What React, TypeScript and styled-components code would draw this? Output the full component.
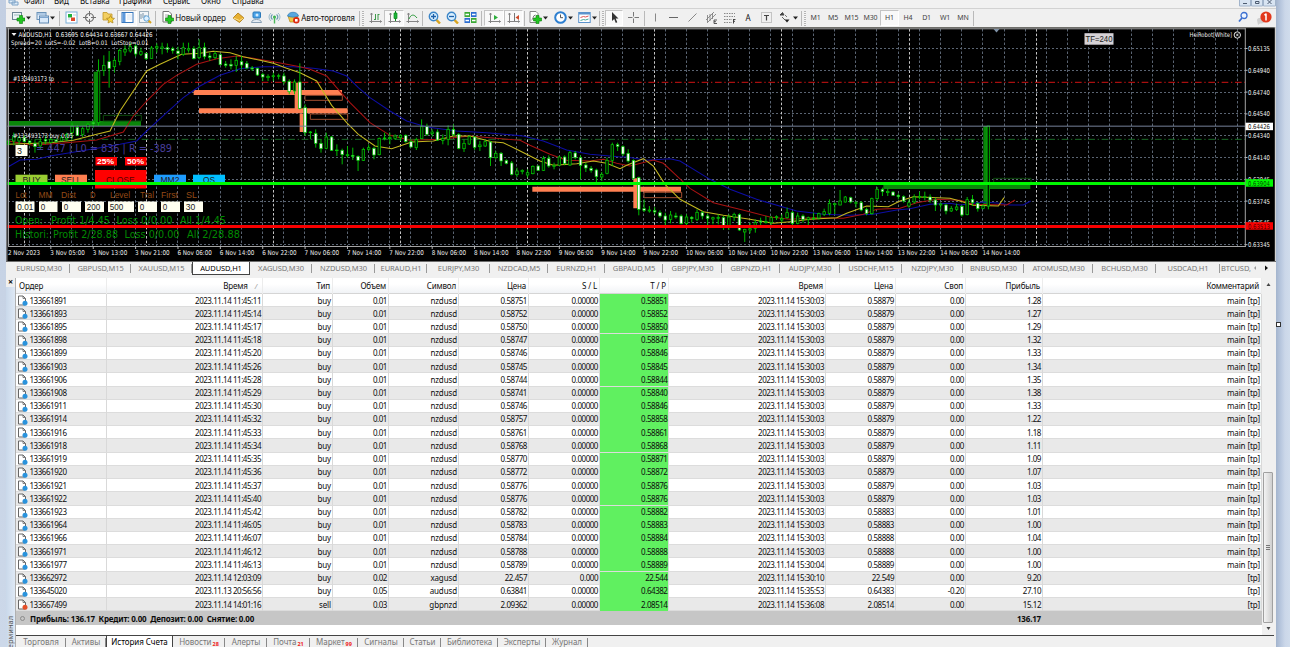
import React, {ReactElement} from 'react';

import styled, {createGlobalStyle} from "styled-components";

const GlobalStyle = createGlobalStyle`
  body {
    margin : 0;
    overflow : hidden;
    background : #c6d2e5;
    font-family : "Noto Sans", "Open Sans", sans-serif;
    font-size : 8px;
    color : #0c0c0c;
  }
  * { box-sizing : border-box; }
`;

const StyledDesktop = styled.div`
  display : flex;
  height : 647px;
  width : 1290px;
  overflow : hidden;
`;

const StyledLeftEdge = styled.div`
  width : 6px;
  flex : none;
  background : linear-gradient(180deg, #c3cfe2, #ccd8e9);
`;

const StyledRightEdge = styled.div`
  position : relative;
  width : 14px;
  flex : none;
  background : linear-gradient(90deg, #a3b4cd 0, #b9c8df 5px, #cbd7e9 9px, #d0dcec 100%);
`;

const StyledHandle = styled.div`
  position : absolute;
  left : 0;
  top : 322px;
  width : 5px;
  height : 5px;
  background : #fff;
  border : 1px solid #333;
`;

const StyledWindow = styled.div`
  width : 1270px;
  flex : none;
  background : #f0f0f0;
  display : flex;
  flex-direction : column;
`;

const StyledMenuBar = styled.div`
  display : flex;
  height : 9px;
  flex : none;
  overflow : hidden;
  background : #f1f1f1;
  border-bottom : 1px solid #d2d2d2;
`;

const StyledMenuItem = styled.span<{$w : number}>`
  width : ${p => p.$w}px;
  flex : none;
  margin-top : -5px;
  line-height : 12px;
  font-size : 8px;
  letter-spacing : -0.1px;
  white-space : nowrap;
`;

const StyledMenuIcon = styled.svg`
  width : 11px;
  height : 6px;
  margin : 0 5px 0 2px;
  flex : none;
`;

const StyledWinButtons = styled.svg`
  margin-left : auto;
  width : 37px;
  height : 7px;
`;

const StyledToolBar = styled.div`
  display : flex;
  align-items : center;
  height : 18px;
  flex : none;
  padding-left : 3px;
  background : #f0f0f0;
`;

const StyledTool = styled.div<{$w : number, $pressed? : boolean}>`
  width : ${p => p.$w}px;
  height : 16px;
  flex : none;
  display : flex;
  align-items : center;
  justify-content : center;
  gap : 1px;
  padding-bottom : 1px;
  font-size : 8px;
  letter-spacing : -0.15px;
  white-space : nowrap;
  color : #111;
  background : ${p => p.$pressed ? '#f9f9f9' : 'transparent'};
  border : ${p => p.$pressed ? '1px solid #c4c4c4' : '0'};
  border-right-color : #fff;
  border-bottom-color : #fff;

  svg {
    flex : none;
    display : block;
  }
`;

const StyledPeriod = styled(StyledTool)`
  font-size : 7px;
  color : #444;
  letter-spacing : -0.2px;
`;

const StyledToolSep = styled.div<{$w : number}>`
  width : ${p => p.$w}px;
  height : 15px;
  flex : none;
  background : linear-gradient(90deg, transparent 1px, #b9b9b9 1px, #b9b9b9 2px, transparent 2px);
`;

const StyledGrip = styled.div<{$w : number}>`
  width : ${p => p.$w}px;
  height : 15px;
  flex : none;
  background : repeating-linear-gradient(180deg, #b5b5b5 0, #b5b5b5 1px, #f6f6f6 1px, #f6f6f6 2px) 1px 0 / 2px 100% no-repeat;
`;

const StyledToolRight = styled.div`
  margin-left : auto;
  margin-right : 2px;
  display : flex;
  gap : 7px;
`;

const StyledChart = styled.svg`
  display : block;
  flex : none;
  width : 1270px;
  height : 234px;
  background : #000;
`;

const StyledChartTabs = styled.div`
  display : flex;
  flex : none;
  height : 17px;
  padding-left : 2px;
  border-top : 1px solid #6d6d6d;
  background : #f0f0f0;
`;

const StyledChartTab = styled.div<{$w : number, $active? : boolean}>`
  width : ${p => p.$w}px;
  height : ${p => p.$active ? 13 : 12}px;
  flex : none;
  text-align : center;
  line-height : 12px;
  font-size : 7.5px;
  letter-spacing : -0.08px;
  white-space : nowrap;
  position : relative;
  color : ${p => p.$active ? '#000' : '#777'};
  background : ${p => p.$active ? '#fff' : 'transparent'};
  border : ${p => p.$active ? '1px solid #444' : '0'};
  border-top : 0;

  &::after {
    content : '';
    position : absolute;
    right : 0;
    top : 2px;
    width : ${p => p.$active ? 0 : 1}px;
    height : 9px;
    background : #999;
  }

  &:last-of-type::after {
    width : 0;
  }
`;

const StyledTabArrows = styled.svg`
  width : 20px;
  height : 13px;
`;

const StyledTerminal = styled.div`
  display : flex;
  flex : none;
  height : 369px;
`;

const StyledSide = styled.div`
  width : 9px;
  flex : none;
  display : flex;
  flex-direction : column;
  justify-content : space-between;
  overflow : hidden;
  background : linear-gradient(90deg, #c9d8ea, #dfe9f5);
`;

const StyledSideClose = styled.div`
  height : 9px;
  line-height : 8px;
  text-align : center;
  font-size : 9px;
  font-weight : bold;
  background : #f0f0f0;
`;

const StyledSideLabel = styled.div`
  writing-mode : vertical-rl;
  transform : rotate(180deg);
  font-size : 7.5px;
  line-height : 9px;
  height : 31px;
  color : #555;
  white-space : nowrap;
  direction : rtl;
`;

const StyledPanel = styled.div`
  width : 1259px;
  flex : none;
  display : flex;
  flex-direction : column;
  border-left : 1px solid #b0b0b0;
`;

const StyledTableArea = styled.div`
  display : flex;
  height : 357px;
  flex : none;
  background : #fff;
`;

const StyledTable = styled.div`
  width : 1246px;
  flex : none;
`;

const COLUMNS = '91px 156px 70px 56px 70px 70px 71px 69px 157px 70px 70px 77px 219px';

const StyledHeaderRow = styled.div`
  display : grid;
  grid-template-columns : ${COLUMNS};
  height : 16px;
  background : linear-gradient(180deg, #fff 40%, #f1f3f6);
  border-bottom : 1px solid #d5d5d5;
`;

const StyledHeaderCell = styled.div<{$left? : boolean, $pad? : number}>`
  text-align : ${p => p.$left ? 'left' : 'right'};
  padding : 0 ${p => p.$pad || 2}px 0 3px;
  line-height : 15px;
  font-size : 8px;
  letter-spacing : -0.15px;
  white-space : nowrap;
  border-right : 1px solid #ececec;

  i {
    color : #999;
    font-size : 7px;
    margin-left : 7px;
  }
`;

const StyledRow = styled.div<{$odd : boolean}>`
  display : grid;
  grid-template-columns : ${COLUMNS};
  height : 13.22px;
  background : ${p => p.$odd ? '#e9e9e9' : '#fff'};
  border-bottom : 1px solid #dcdcdc;
`;

const StyledCell = styled.div<{$tp? : boolean}>`
  display : flex;
  align-items : center;
  justify-content : flex-end;
  padding-right : ${p => p.$tp ? 0.5 : 1}px;
  line-height : 12px;
  height : 13px;
  font-size : 8px;
  letter-spacing : -0.46px;
  white-space : nowrap;
  border-right : 1px solid #d9d9d9;
  background : ${p => p.$tp ? '#60f060' : 'transparent'};
`;

const StyledWordCell = styled(StyledCell)`
  letter-spacing : -0.12px;
`;

const StyledOrderCell = styled(StyledCell)`
  justify-content : flex-start;
  padding-left : 1px;
  gap : 1.5px;
`;

const StyledTotalRow = styled.div`
  display : flex;
  align-items : center;
  height : 14px;
  padding-left : 4px;
  background : #c6c6c6;
  font-size : 8px;
  font-weight : bold;
  letter-spacing : -0.18px;
  white-space : pre;
`;

const StyledTotalText = styled.div`
  width : 500px;
  padding-left : 5px;
`;

const StyledTotalSum = styled.div`
  width : 516px;
  text-align : right;
`;

const StyledTotalDot = styled.div`
  width : 5px;
  height : 5px;
  border : 1px solid #8b8b8b;
  border-radius : 50%;
`;

const StyledScroll = styled.div`
  width : 12px;
  flex : none;
  display : flex;
  flex-direction : column;
  align-items : center;
  background : #f0f0f0;
  padding-top : 2px;
`;

const StyledScrollArrow = styled.svg`
  width : 9px;
  height : 9px;
  flex : none;
`;

const StyledThumb = styled.div`
  width : 10px;
  height : 151px;
  margin-top : 183px;
  flex : none;
  display : flex;
  flex-direction : column;
  align-items : center;
  justify-content : center;
  gap : 1px;
  border : 1px solid #a0a0a0;
  border-radius : 1px;
  background : linear-gradient(90deg, #f3f3f3, #cfcfcf);

  i {
    width : 4px;
    height : 1px;
    background : #777;
  }
`;

const StyledBottomTabs = styled.div`
  display : flex;
  height : 12px;
  overflow : hidden;
  border-top : 1px solid #444;
`;

const StyledBottomTab = styled.div<{$w : number, $active? : boolean}>`
  position : relative;
  width : ${p => p.$w}px;
  flex : none;
  height : 14px;
  display : flex;
  justify-content : center;
  line-height : 12px;
  font-size : 8px;
  letter-spacing : -0.04px;
  white-space : nowrap;
  color : ${p => p.$active ? '#000' : '#777'};
  background : ${p => p.$active ? '#fff' : 'transparent'};
  border : ${p => p.$active ? '1px solid #444' : '0'};
  border-width : 0 1px;

  &::after {
    content : '';
    position : absolute;
    right : 0;
    top : 2px;
    width : ${p => p.$active ? 0 : 1}px;
    height : 9px;
    background : #888;
  }

  b {
    color : #e22;
    font-size : 5.5px;
    letter-spacing : 0;
    margin : 2px 0 0 1px;
  }
`;

/* ---------- icons ---------- */

function Caret(): ReactElement {
  return <svg width="5" height="4"><path d="M0 .5h5L2.500 3.500z" fill="#222" /></svg>;
}

function Plus({x, y}: {x : number, y : number}): ReactElement {
  return <path d={`M${x + 2.5} ${y}h3v2.500h2.500v3h-2.500v2.500h-3v-2.500h-2.500v-3h2.500z`} fill="#23c423" stroke="#0b7d0b" strokeWidth=".6" />;
}

function Axes(): ReactElement {
  return <path d="M2.500 2v10M1.500 3.500l1-1.500 1 1.500M.5 10.500h12M11 9.500l1.500 1L11 11.500" stroke="#858585" fill="none" />;
}

function Magnifier({plus}: {plus? : boolean}): ReactElement {
  return (
    <>
      <path d="M8 8.500l4 4" stroke="#d9a520" strokeWidth="2.400" />
      <circle cx="5.500" cy="5.500" r="4.200" fill="#d8efff" stroke="#3c86c8" strokeWidth="1.400" />
      <path d={plus ? "M3 5.500h5M5.500 3v5" : "M3 5.500h5"} stroke="#1c5fa8" strokeWidth="1.300" />
    </>
  );
}

const icons: Record<string, ReactElement> = {
  newChart : <><rect x=".5" y="1.500" width="9" height="7" fill="#eef4f8" stroke="#6b8494" /><path d="M2 4h6" stroke="#9bb" /><Plus x={5} y={4.5} /></>,
  profiles : <><rect x="1" y="1.500" width="9" height="7" fill="#e3eefa" stroke="#6c93b8" /><rect x="3.500" y="5" width="9" height="7" fill="#d9e9fa" stroke="#5e88b2" /><path d="M1 3h9M3.500 6.500h9" stroke="#7fa6cf" /></>,
  market : <><rect x="1" y="1" width="11" height="11" fill="#fff" stroke="#7ab0d8" /><path d="M3 3h4v3.500H3z" fill="#1fb13a" /><path d="M6 6.500h4V10H6z" fill="#e0482a" /><path d="M3 8h2M8 4h3" stroke="#bcd" /></>,
  target : <><circle cx="6.500" cy="6.500" r="4" fill="none" stroke="#707070" strokeWidth="1.200" /><path d="M6.500 0v5M6.500 8v5M0 6.500h5M8 6.500h5" stroke="#707070" /></>,
  folder : <><path d="M1 1.500h4l1 1.500h4v6H1z" fill="#f3cf62" stroke="#bf9526" strokeWidth=".8" /><path d="M8.500 4.500l1.300 2.500 2.700.4-2 1.900.5 2.700-2.500-1.300L6 12l.5-2.700-2-1.900 2.700-.4z" fill="#f7d23c" stroke="#a8801c" strokeWidth=".7" /></>,
  navigator : <><rect x="1" y="1.500" width="11" height="10" fill="#fff" stroke="#3777bd" /><path d="M1.500 2h3v9h-3z" fill="#5d99dc" /><path d="M6 4h5M6 6h5M6 8h5" stroke="#d4e2f1" /></>,
  tester : <><rect x=".5" y=".5" width="9" height="11" fill="#f2f5f8" stroke="#9fb0bd" /><path d="M2 3v5M4 2v5M6 4v5" stroke="#7893a8" /><path d="M9 9l3 3" stroke="#d9a520" strokeWidth="2" /><circle cx="7.500" cy="7.500" r="2.700" fill="#dff1ff" stroke="#5da0d5" /></>,
  order : <><path d="M2 .5h6l2.500 2.500v8H2z" fill="#fff" stroke="#777" /><path d="M4 4h4M4 6h3" stroke="#aaa" /><Plus x={4.5} y={4.5} /></>,
  gold : <><path d="M1 7l5-5 6 5-4.500 4.500z" fill="#e7b032" stroke="#a9750e" strokeWidth=".8" /><path d="M1.500 7l6 2.500L11.500 7" stroke="#fbe08a" fill="none" /></>,
  terminal : <><rect x="3" y="1" width="7.500" height="6" rx="1" fill="#4aa3e8" stroke="#2b78b8" /><path d="M1.500 11.500c0-4 10-4 10 0z" fill="#e6edf4" stroke="#8aa0b5" /><circle cx="7" cy="4" r="1.500" fill="#d2ecff" /></>,
  signal : <><path d="M3 10a5 5 0 010-8M10 10a5 5 0 000-8" stroke="#9dbccb" fill="none" /><path d="M4.500 8.500a3 3 0 010-5M8.500 8.500a3 3 0 000-5" stroke="#6e9eb5" fill="none" strokeWidth="1.300" /><circle cx="6.500" cy="6" r="1.500" fill="#36b14a" /><path d="M6.500 6v6.500" stroke="#4bb85a" strokeWidth="1.400" /></>,
  auto : <><path d="M1 5l2 6h5l3-6z" fill="#f0c541" stroke="#b48a1d" strokeWidth=".7" /><path d="M.5 5c1-5 10-5 11 0-3 1.500-8 1.500-11 0z" fill="#58a8e0" stroke="#2d78b2" strokeWidth=".7" /><circle cx="9.300" cy="9.300" r="3.200" fill="#dd2b12" /><rect x="8" y="8" width="2.600" height="2.600" fill="#fff" /></>,
  bars : <><Axes /><path d="M6.500 3v6M5 8.500h1.500M9 3v6M9 3.500H10.500" stroke="#3f9a4a" fill="none" /></>,
  candles : <><Axes /><path d="M7.500 0v10" stroke="#0c8a1c" /><path d="M6 2h3v5.500H6z" fill="#1eb43a" stroke="#0c8a1c" strokeWidth=".7" /></>,
  line : <><Axes /><path d="M3 8c2-5 5-5 8-1" stroke="#2a9a3a" fill="none" /></>,
  zoomIn : <Magnifier plus />,
  zoomOut : <Magnifier />,
  tile : <><path d="M.5 1h5.500v5H.5z" fill="#3aa934" /><path d="M7 1h5.500v5H7z" fill="#2a6cd0" /><path d="M.5 7h5.500v5H.5z" fill="#2a6cd0" /><path d="M7 7h5.500v5H7z" fill="#3aa934" /><path d="M1.500 3.500h3.500M8 3.500h3.500M1.500 9.500h3.500M8 9.500h3.500" stroke="#fff" strokeWidth="1.600" /></>,
  scroll : <><Axes /><path d="M6 4l4 2.500L6 9z" fill="#2eae3c" /></>,
  shift : <><Axes /><path d="M7.500 2v8" stroke="#777" /><path d="M12 4v5L8.500 6.500z" fill="#cf4a2a" /></>,
  indicator : <><path d="M1 .5h6l2 2v9H1z" fill="#fff" stroke="#888" /><path d="M2.500 9c2 0 1-5 4-5" stroke="#777" fill="none" /><Plus x={4.5} y={4.5} /></>,
  clock : <><circle cx="6.500" cy="6.500" r="5.300" fill="#fff" stroke="#2d7fd0" strokeWidth="2" /><path d="M6.500 3.500v3.200H9" stroke="#555" fill="none" /></>,
  template : <><rect x=".7" y="1.500" width="11.500" height="10" fill="#fff" stroke="#5b93cc" /><path d="M1 2.500h11" stroke="#5b93cc" strokeWidth="2" /><path d="M2.500 6.500l3-1 2 .5 3-1" stroke="#d55" fill="none" /><path d="M2.500 9.500l3-1 2 .5 3-1" stroke="#4a9" fill="none" /></>,
  pointer : <path d="M4 1v9l2.200-2 1.600 4 1.500-.7L7.700 7.500H10.500z" fill="#333" />,
  cross : <path d="M6.500 1v4.500M6.500 7.500v4.500M1 6.500h4.500M7.500 6.500h4.500" stroke="#777" />,
  vline : <path d="M6.500 2.500v8" stroke="#888" />,
  hline : <path d="M2 6.500h9" stroke="#666" />,
  trend : <path d="M2.500 10.500l8-8" stroke="#888" />,
  channel : <><path d="M1 9l8-8M2 12l9-9M2.500 4v7M5 3v7M7.500 2v6" stroke="#777" strokeWidth=".8" /><path d="M9 9h3M9 9v3.500h3M9 10.700h2" stroke="#333" fill="none" strokeWidth=".8" /></>,
  fibo : <><path d="M1 2.500h11M1 5.500h11M1 8.500h8M1 11.500h8" stroke="#888" strokeDasharray="1.500 1" /><path d="M10.500 8v4.500M10.500 8.500h2M10.500 10.300h1.500" stroke="#333" fill="none" strokeWidth=".9" /></>,
  arrows : <><path d="M1 4l2.500-2.500L5 4z" fill="#444" stroke="#444" /><path d="M3 6l3 3" stroke="#666" /><path d="M5.500 8.500h5l-2.500 3z" fill="#222" /><path d="M6 4l2 2" stroke="#777" /></>,
  textLabel : <><rect x="1.500" y="1.500" width="10" height="10" fill="none" stroke="#999" strokeDasharray="1 1" /><path d="M4 4.500h5M6.500 4.500v5" stroke="#444" strokeWidth="1.200" /></>,
};

interface IconProps {
  name : string
}

function Icon({name}: IconProps): ReactElement {
  return <svg width="13" height="13" viewBox="0 0 13 13">{icons[name]}</svg>;
}

/* ---------- data ---------- */

interface ITool {
  w : number
  icon? : string
  text? : string
  caret? : boolean
  pressed? : boolean
  kind? : 'sep' | 'grip' | 'period'
}

const tools: ITool[] = [
  {w : 24, icon : 'newChart', caret : true},
  {w : 25, icon : 'profiles', caret : true},
  {w : 4, kind : 'sep'},
  {w : 18, icon : 'market'},
  {w : 19, icon : 'target'},
  {w : 18, icon : 'folder'},
  {w : 20, icon : 'navigator', pressed : true},
  {w : 17, icon : 'tester'},
  {w : 4, kind : 'sep'},
  {w : 71, icon : 'order', text : 'Новый ордер'},
  {w : 18, icon : 'gold'},
  {w : 18, icon : 'terminal'},
  {w : 19, icon : 'signal'},
  {w : 74, icon : 'auto', text : 'Авто-торговля'},
  {w : 3, kind : 'sep'},
  {w : 5, kind : 'grip'},
  {w : 18, icon : 'bars'},
  {w : 20, icon : 'candles', pressed : true},
  {w : 17, icon : 'line'},
  {w : 4, kind : 'sep'},
  {w : 18, icon : 'zoomIn'},
  {w : 18, icon : 'zoomOut'},
  {w : 19, icon : 'tile'},
  {w : 4, kind : 'sep'},
  {w : 20, icon : 'scroll', pressed : true},
  {w : 19, icon : 'shift', pressed : true},
  {w : 3, kind : 'sep'},
  {w : 25, icon : 'indicator', caret : true},
  {w : 25, icon : 'clock', caret : true},
  {w : 22, icon : 'template', caret : true},
  {w : 3, kind : 'sep'},
  {w : 4, kind : 'grip'},
  {w : 18, icon : 'pointer', pressed : true},
  {w : 20, icon : 'cross'},
  {w : 3, kind : 'sep'},
  {w : 18, icon : 'vline'},
  {w : 19, icon : 'hline'},
  {w : 19, icon : 'trend'},
  {w : 18, icon : 'channel'},
  {w : 19, icon : 'fibo'},
  {w : 18, text : 'A'},
  {w : 19, icon : 'textLabel'},
  {w : 24, icon : 'arrows', caret : true},
  {w : 3, kind : 'sep'},
  {w : 4, kind : 'grip'},
  {w : 17, text : 'M1', kind : 'period'},
  {w : 18, text : 'M5', kind : 'period'},
  {w : 19, text : 'M15', kind : 'period'},
  {w : 19, text : 'M30', kind : 'period'},
  {w : 19, text : 'H1', kind : 'period', pressed : true},
  {w : 18, text : 'H4', kind : 'period'},
  {w : 19, text : 'D1', kind : 'period'},
  {w : 18, text : 'W1', kind : 'period'},
  {w : 18, text : 'MN', kind : 'period'},
  {w : 3, kind : 'sep'},
];

const menu: [string, number][] = [
  ['Файл', 30], ['Вид', 26], ['Вставка', 39], ['Графики', 44], ['Сервис', 38], ['Окно', 31], ['Справка', 40],
];

const chartTabs: [string, number][] = [
  ['EURUSD,M30', 62], ['GBPUSD,M15', 61], ['XAUUSD,M15', 61], ['AUDUSD,H1', 58], ['XAGUSD,M30', 62],
  ['NZDUSD,M30', 63], ['EURAUD,H1', 52], ['EURJPY,M30', 63], ['NZDCAD,M5', 58], ['EURNZD,H1', 57],
  ['GBPAUD,M5', 58], ['GBPJPY,M30', 59], ['GBPNZD,H1', 58], ['AUDJPY,M30', 60], ['USDCHF,M15', 62],
  ['NZDJPY,M30', 61], ['BNBUSD,M30', 61], ['ATOMUSD,M30', 69], ['BCHUSD,M30', 63], ['USDCAD,H1', 64], ['BTCUSD,', 32],
];

const bottomTabs: [string, number, string][] = [
  ['Торговля', 50, ''], ['Активы', 40, ''], ['История Счета', 67, ''], ['Новости', 52, '28'], ['Алерты', 42, ''],
  ['Почта', 43, '21'], ['Маркет', 48, '99'], ['Сигналы', 46, ''], ['Статьи', 37, ''], ['Библиотека', 57, ''],
  ['Эксперты', 48, ''], ['Журнал', 42, ''],
];

// order, open time, type, volume, symbol, price, s/l, t/p, close time, price, swap, profit, comment
const nzd = (id : string, open : string, price : string, tp : string, close : string, closePrice : string, profit : string) => [
  '133661' + id, '2023.11.14 11:' + open, 'buy', '0.01', 'nzdusd', '0.58' + price, '0.00000', '0.58' + tp,
  '2023.11.14 15:30:' + close, '0.58' + closePrice, '0.00', profit, 'main [tp]',
];

const orders: string[][] = [
  nzd('891', '45:11', '751', '851', '03', '879', '1.28'),
  nzd('893', '45:14', '752', '852', '03', '879', '1.27'),
  nzd('895', '45:17', '750', '850', '03', '879', '1.29'),
  nzd('898', '45:18', '747', '847', '03', '879', '1.32'),
  nzd('899', '45:20', '746', '846', '03', '879', '1.33'),
  nzd('903', '45:26', '745', '845', '03', '879', '1.34'),
  nzd('906', '45:28', '744', '844', '03', '879', '1.35'),
  nzd('908', '45:29', '741', '840', '03', '879', '1.38'),
  nzd('911', '45:30', '746', '846', '03', '879', '1.33'),
  nzd('914', '45:32', '757', '858', '03', '879', '1.22'),
  nzd('916', '45:33', '761', '861', '03', '879', '1.18'),
  nzd('918', '45:34', '768', '868', '03', '879', '1.11'),
  nzd('919', '45:35', '770', '871', '03', '879', '1.09'),
  nzd('920', '45:36', '772', '872', '03', '879', '1.07'),
  nzd('921', '45:37', '776', '876', '03', '879', '1.03'),
  nzd('922', '45:40', '776', '876', '03', '879', '1.03'),
  nzd('923', '45:42', '782', '882', '03', '883', '1.01'),
  nzd('964', '46:05', '783', '883', '03', '883', '1.00'),
  nzd('966', '46:07', '784', '884', '03', '888', '1.04'),
  nzd('971', '46:12', '788', '888', '03', '888', '1.00'),
  nzd('977', '46:13', '789', '889', '04', '889', '1.00'),
  ['133662972', '2023.11.14 12:03:09', 'buy', '0.02', 'xagusd', '22.457', '0.000', '22.544', '2023.11.14 15:30:10', '22.549', '0.00', '9.20', '[tp]'],
  ['133645020', '2023.11.13 20:56:56', 'buy', '0.05', 'audusd', '0.63841', '0.00000', '0.64382', '2023.11.14 15:35:53', '0.64383', '-0.20', '27.10', '[tp]'],
  ['133667499', '2023.11.14 14:01:16', 'sell', '0.03', 'gbpnzd', '2.09362', '0.00000', '2.08514', '2023.11.14 15:36:08', '2.08514', '0.00', '15.12', '[tp]'],
];

const headers = ['Ордер', 'Время', 'Тип', 'Объем', 'Символ', 'Цена', 'S / L', 'T / P', 'Время', 'Цена', 'Своп', 'Прибыль', 'Комментарий'];

// high, low, body top, body bottom, 1 = bull / 0 = bear (thirds of a pixel)
const candles: number[][] = [
  [335,355,345,355,1],[320,358,332,345,1],[330,390,335,345,1],[328,350,335,347,0],[343,358,345,350,0],[340,380,352,362,0],
  [335,370,347,360,1],[330,355,340,345,0],[335,352,340,350,1],[338,350,342,346,0],[330,345,335,345,1],[320,345,325,337,1],
  [290,340,300,320,1],[298,330,304,328,0],[302,333,308,325,1],[290,320,295,310,1],[283,305,290,293,0],[100,300,135,290,1],
  [88,150,118,133,1],[75,185,107,127,0],[95,140,103,122,1],[68,118,73,106,1],[58,90,70,78,1],[50,80,62,75,1],
  [55,92,60,84,0],[65,90,77,85,1],[80,102,82,98,0],[60,98,66,97,1],[52,80,62,66,1],[50,85,63,67,1],
  [52,80,65,70,0],[62,83,68,74,0],[62,100,75,83,0],[50,90,65,85,1],[50,80,68,72,1],[60,100,68,98,0],
  [40,100,65,95,1],[50,100,65,92,0],[80,105,90,94,0],[75,100,83,95,1],[83,118,86,116,0],[105,125,114,118,0],
  [100,130,115,120,0],[90,138,103,118,1],[90,130,107,117,0],[105,130,112,126,0],[120,135,126,129,0],[125,150,127,147,0],
  [140,165,145,153,0],[145,165,151,155,1],[140,165,149,152,1],[143,160,149,151,1],[140,175,150,167,0],[160,205,166,197,0],
  [160,205,168,195,1],[112,250,168,247,0],[235,330,245,320,0],[315,340,318,320,1],[310,365,322,352,0],[340,380,352,368,0],
  [320,370,333,367,1],[330,375,333,373,0],[355,390,372,374,1],[368,415,373,386,0],[360,395,386,389,1],[365,402,388,391,0],
  [388,435,391,403,0],[365,405,370,403,1],[355,375,365,370,1],[362,400,367,387,0],[335,388,337,386,1],[320,343,336,338,1],
  [320,355,335,338,1],[325,342,330,337,1],[325,345,328,335,1],[325,350,328,347,0],[340,365,347,363,0],[335,372,340,365,1],
  [280,340,302,338,1],[293,330,302,325,0],[310,332,318,323,1],[310,345,318,342,0],[325,355,337,343,1],[298,358,310,340,1],
  [295,330,310,326,0],[322,370,325,367,0],[340,378,352,368,1],[328,357,332,354,1],[330,372,333,364,0],[345,375,357,362,1],
  [340,363,347,360,1],[345,420,348,395,0],[375,400,382,395,1],[378,420,382,405,0],[400,415,404,412,0],[405,448,411,445,0],
  [425,453,435,446,1],[430,445,433,437,1],[430,455,440,447,1],[418,445,421,443,1],[418,435,420,433,0],[390,435,397,433,1],
  [388,425,397,420,0],[410,430,418,421,1],[390,420,393,418,1],[388,418,393,413,0],[375,420,380,417,1],[375,400,381,395,0],
  [388,460,395,418,0],[410,438,417,426,0],[420,440,427,433,0],[428,470,432,452,0],[438,465,445,453,1],[395,445,403,442,1],
  [350,420,356,403,1],[350,375,356,361,0],[358,390,362,384,0],[370,410,382,405,0],[400,460,403,457,0],[452,568,455,550,0],
  [520,558,548,553,0],[540,560,552,555,1],[543,565,554,558,0],[553,575,560,570,0],[560,600,570,582,0],[555,592,567,580,1],
  [560,578,570,573,0],[565,595,570,593,0],[565,600,573,593,1],[570,590,574,578,0],[550,585,559,580,1],[555,580,560,570,0],
  [563,610,570,577,0],[572,595,575,579,1],[565,595,574,577,1],[570,612,575,605,0],[565,612,573,603,1],[560,585,565,573,1],
  [562,615,566,612,0],[608,648,610,618,1],[590,622,608,612,1],[580,620,590,607,1],[575,600,585,588,0],[570,593,587,590,1],
  [570,600,575,590,1],[568,582,572,575,1],[565,590,577,582,1],[545,578,560,575,1],[555,600,560,592,0],[560,595,570,592,1],
  [565,590,570,580,0],[572,598,575,580,1],[560,582,576,578,1],[560,580,563,576,1],[548,570,557,565,1],[520,568,532,562,1],
  [530,565,533,536,1],[492,538,525,537,1],[510,530,513,528,1],[512,532,515,528,0],[525,545,530,532,1],[525,556,530,552,0],
  [545,568,550,562,0],[515,566,518,563,1],[483,525,490,518,1],[485,510,490,497,0],[488,510,496,500,1],[495,510,498,508,0],
  [503,520,508,512,0],[508,530,512,525,0],[520,545,530,540,1],[505,533,513,528,1],[497,520,511,514,1],[497,523,512,514,1],
  [505,530,513,522,0],[515,555,522,537,0],[530,550,534,537,1],[533,565,537,555,0],[540,558,547,555,1],[533,555,543,550,1],
  [538,572,541,567,0],[513,568,521,566,1],[507,540,520,530,0],[528,557,532,548,0],[535,550,540,547,1],[300,550,300,540,1],
];

const yellowMa = '25,355 150,350 220,343 290,325 330,315 360,255 400,195 440,135 480,115 545,85 600,82 640,76 690,80 730,92 780,103 820,112 860,127 900,140 950,165 995,238 1040,290 1075,325 1125,360 1175,368 1235,348 1300,345 1360,330 1410,330 1475,347 1510,350 1550,370 1620,405 1660,418 1730,413 1780,405 1820,412 1860,428 1880,418 1930,398 1960,420 1995,475 2040,520 2110,557 2170,568 2250,580 2320,592 2370,587 2430,580 2510,575 2540,562 2600,540 2665,542 2700,525 2740,512 2850,517 2880,525 2920,538 2995,540 3012,515';
const redMa = '25,345 100,358 200,350 290,342 370,318 400,270 440,225 490,175 530,148 590,115 650,98 710,90 760,97 820,107 900,122 930,130 980,150 1010,185 1050,230 1110,290 1170,328 1230,343 1320,340 1410,330 1470,335 1560,343 1590,358 1650,385 1700,403 1770,405 1810,400 1850,412 1890,420 1960,402 1990,412 2020,440 2070,487 2140,530 2240,555 2310,573 2370,580 2440,575 2530,577 2590,565 2630,550 2700,547 2750,530 2810,520 2880,523 2920,535 3020,537 3045,522';
const blueMa = '25,422 60,402 110,400 150,390 210,380 300,365 360,355 410,345 440,315 500,260 550,215 600,180 660,148 720,128 790,122 880,122 940,127 1000,135 1040,150 1075,185 1110,215 1170,255 1220,285 1280,303 1370,315 1460,320 1570,330 1630,345 1700,372 1770,385 1855,392 1880,393 1940,403 2010,398 2040,405 2130,460 2190,490 2270,520 2390,555 2470,565 2550,568 2620,565 2690,552 2730,548 2790,535 2850,532 2880,537 2950,528 3000,532 3030,537 3070,537 3092,525';

const prices = ['0.65135', '0.64940', '0.64740', '0.64540', '0.64340', '0.64140', '0.63945', '0.63745', '0.63545', '0.63345'];

const times = [
  '2 Nov 2023', '3 Nov 05:00', '3 Nov 13:00', '3 Nov 21:00', '6 Nov 06:00', '6 Nov 14:00', '6 Nov 22:00', '7 Nov 06:00',
  '7 Nov 14:00', '7 Nov 22:00', '8 Nov 06:00', '8 Nov 14:00', '8 Nov 22:00', '9 Nov 06:00', '9 Nov 14:00', '9 Nov 22:00',
  '10 Nov 06:00', '10 Nov 14:00', '10 Nov 22:00', '13 Nov 06:00', '13 Nov 14:00', '13 Nov 22:00', '14 Nov 06:00', '14 Nov 14:00',
];

const days = [24.5, 146.5, 273.5, 400.5, 527.5, 654.5, 781.5, 909.5, 1036.5];

interface LabelProps {
  x : number
  y : number
  w : number
  size : number
  fill : string
  bold? : boolean
  arial? : boolean
  children : string
}

function Label({x, y, w, size, fill, bold, arial, children}: LabelProps): ReactElement {
  return (
    <text
      x={x}
      y={y}
      fontSize={size}
      fill={fill}
      textLength={w}
      lengthAdjust="spacingAndGlyphs"
      fontWeight={bold ? 700 : 400}
      fontFamily={arial ? '"Liberation Sans", sans-serif' : '"DejaVu Sans", sans-serif'}
      xmlSpace="preserve"
    >
      {children}
    </text>
  );
}

// x, width, text, text width, background
const buttons: [number, number, string, number, string][] = [
  [15.500, 32, 'BUY', 18, '#9acd32'], [55, 32, 'SELL', 20, '#ff7f50'], [154, 32, 'MM2', 19, '#1e9cff'], [193, 32, 'OS', 12, '#00bfff'],
];

// x, width, title, title x, title width, value, value width
const fields: [number, number, string, number, number, string, number][] = [
  [15.500, 19, 'Lot', 15.500, 11, '0.01', 16], [39, 18.500, 'MM', 38.500, 14, '0', 4.500], [62, 19, 'Dist', 61, 15, '0', 4.500],
  [85, 19, 'D', 90, 5.500, '200', 13.500], [108, 26, 'Level', 110, 20, '500', 13.500], [138, 19, 'Tral', 140, 14, '0', 4.500],
  [161, 19, 'First', 161, 17, '0', 4.500], [184, 19, 'SL', 186, 11, '30', 9.500],
];

function Chart(): ReactElement {
  return (
    <StyledChart viewBox="6 27 1270 234">
      <rect x="6" y="27" width="1270" height="1.200" fill="#6f6f6b" />
      <rect x="6" y="27" width="1.500" height="234" fill="#77777a" />
      <rect x="1274.800" y="27" width="1.200" height="234" fill="#d0d0d0" />

      <g stroke="#5a6472" strokeDasharray="2 2">
        {prices.map((p, i) => <path key={p} d={`M8 ${Math.round(48 + i * 21.8) + 0.5}H1245`} />)}
        {Array.from({length : 58}, (_, i) => <path key={i} d={`M${Math.round(28.8 + i * 21.19) + 0.5} 29V246`} strokeDasharray="2.500 2" />)}
      </g>
      <g stroke="#c4c4c4" strokeDasharray="2.600 2">
        {days.map(d => <path key={d} d={`M${d} 29V246`} />)}
      </g>

      <g transform="translate(0 26) scale(.33333)">
        <path d="M25 169H3735" stroke="#a80f0f" strokeWidth="3.500" strokeDasharray="20 8 4 8" />
        <path d="M25 340H3735" stroke="#1a6b28" strokeWidth="3" strokeDasharray="20 8 4 8" />

        <path d="M25 285H423v15H25zM281 137h15v153h-15zM2650 473h441v16H2650zM2950 300h15v240h-15z" fill="#0a860a" />
        <path d="M310 268h114v17H310zM2981 457h112v16H2981z" fill="none" stroke="#0b4a0b" strokeWidth="3" />
        <path d="M581 192H1026v15H581zM597 247h446v15H597zM884 170h14v77h-14zM899 263h12v55h-12zM1597 482h446v15H1597zM1900 457h15v90h-15z" fill="#ff8052" />
        <path d="M915 208h112v15H915zM931 264h112v16H931zM1932 499h113v16H1932z" fill="none" stroke="#a04e30" strokeWidth="3" />

        <g fill="none" strokeWidth="3.200">
          <polyline points={blueMa} stroke="#0d0da4" />
          <polyline points={redMa} stroke="#a81212" />
          <polyline points={yellowMa} stroke="#c4b820" />
        </g>

        {candles.map(([high, low, top, bottom, bull], i) => {
          const x = 25.5 + i * 15.89;
          return (
            <g key={i} stroke="#00c800" strokeWidth="2.800">
              <path d={`M${x} ${high}V${low}`} />
              <rect x={x - 3.8} y={top} width="7.600" height={Math.max(bottom - top, 2)} fill={bull ? '#001a00' : '#fff'} strokeWidth="2.200" />
            </g>
          );
        })}
        <path d="M22 300.500H3735" stroke="#76839a" strokeWidth="3" />
      </g>

      <rect x="15.500" y="145" width="12" height="11" fill="#fffff0" />
      <Label x={17} y={153.800} w={5} size={9} fill="#222" arial>3</Label>
      <Label x={36} y={151.800} w={136} size={9.800} fill="#483d9b">{'= 447 | L0 = 836 | R = -389'}</Label>

      <rect x="95.500" y="157" width="21.500" height="8.500" fill="#f00" />
      <rect x="125" y="157" width="21.500" height="8.500" fill="#f00" />
      <Label x={97} y={164} w={17} size={8} fill="#fff" bold arial>25%</Label>
      <Label x={127} y={164} w={17} size={8} fill="#fff" bold arial>50%</Label>
      <rect x="95" y="170" width="51.500" height="18.500" fill="#f00" />
      <Label x={106} y={182.500} w={28.500} size={9.500} fill="#5a0000" arial>CLOSE</Label>

      {buttons.map(([x, w, text, tw, fill]) => (
        <g key={text}>
          <rect x={x} y="174.700" width={w} height="9" fill={fill} />
          <Label x={x + (w - tw) / 2} y={183} w={tw} size={8.500} fill="#202020" arial>{text}</Label>
        </g>
      ))}

      {fields.map(([x, w, title, tx, tw, value, vw]) => (
        <g key={title}>
          <Label x={tx} y={198} w={tw} size={8.800} fill="#944a16" arial>{title}</Label>
          <rect x={x} y="201.500" width={w} height="10.500" fill="#fffff0" />
          <Label x={x + 1.800} y={210} w={vw} size={8.500} fill="#222" arial>{value}</Label>
        </g>
      ))}

      <Label x={15} y={224} w={28} size={10} fill="#008a00">Open:</Label>
      <Label x={51} y={224} w={59} size={10} fill="#008a00">Profit 1/4.45</Label>
      <Label x={116.500} y={224} w={56} size={10} fill="#008a00">Loss 0/0.00</Label>
      <Label x={180} y={224} w={46} size={10} fill="#008a00">All 1/4.45</Label>
      <Label x={15} y={237.800} w={34} size={10} fill="#008a00">Histori:</Label>
      <Label x={53} y={237.800} w={65} size={10} fill="#008a00">Profit 2/28.88</Label>
      <Label x={124.500} y={237.800} w={55} size={10} fill="#008a00">Loss 0/0.00</Label>
      <Label x={187} y={237.800} w={53} size={10} fill="#008a00">All 2/28.88</Label>

      <rect x="7.500" y="182" width="1237.500" height="3" fill="#00f800" />
      <rect x="7.500" y="225" width="1237.500" height="3" fill="#f80000" />

      <path d="M7.500 28.800H1245M8.500 28V246M1245.300 28V246.500M8 246.500H1246" stroke="#a4a4a4" fill="none" />
      <path d="M11.500 33h5l-2.500 3z" fill="#eee" />
      <Label x={18.500} y={37} w={134} size={6.600} fill="#f4f4f4">AUDUSD,H1  0.63695 0.64434 0.63667 0.64426</Label>
      <Label x={11} y={45} w={137.500} size={6.200} fill="#eee">Spread=20  LotS=-0.02  LotB=0.01  LotStop=0.01</Label>
      <Label x={13} y={80.800} w={41} size={6.400} fill="#eee">#133493173 tp</Label>
      <Label x={13} y={137.800} w={60} size={6.400} fill="#eee">#133493173 buy 0.05</Label>

      <path d="M993.500 29h6l-3 3.500z" fill="#8093a8" />
      <rect x="1084.500" y="33.200" width="29" height="11.500" fill="#d6d2d6" />
      <Label x={1085.500} y={42.300} w={27} size={9.500} fill="#222" arial>TF=240</Label>
      <Label x={1189.500} y={37} w={42.500} size={6.400} fill="#eee">HeiRobot[White]</Label>
      <circle cx="1237.300" cy="35" r="3.200" fill="none" stroke="#e0e0e0" />
      <path d="M1235.800 33.500l3 3M1238.800 33.500l-3 3" stroke="#e0e0e0" strokeWidth=".8" />

      {prices.map((p, i) => (
        <g key={p}>
          <path d={`M1245 ${48.5 + i * 21.8}h2.500`} stroke="#b4b4b4" />
          <Label x={1248} y={51 + i * 21.8} w={22} size={6.600} fill="#eee">{p}</Label>
        </g>
      ))}
      <rect x="1245.500" y="122.700" width="27.500" height="7.500" fill="#fff" />
      <Label x={1248} y={129} w={22} size={6.600} fill="#111">0.64426</Label>
      <rect x="1245.500" y="179.200" width="27.500" height="7.500" fill="#00f800" />
      <Label x={1248} y={185.500} w={22} size={6.600} fill="#064a06">0.63904</Label>
      <rect x="1245.500" y="222.200" width="27.500" height="7.500" fill="#f80000" />
      <Label x={1248} y={228.500} w={22} size={6.600} fill="#4a0000">0.63513</Label>

      {times.map((t, i) => (
        <g key={t}>
          {i > 0 && <path d={`M${8.5 + i * 42.37} 246v3`} stroke="#b4b4b4" />}
          <Label x={8 + i * 42.37} y={255.200} w={t.length > 11 ? 37.5 : t.length > 10 ? 34.5 : 32} size={6.600} fill="#eee">{t}</Label>
        </g>
      ))}
    </StyledChart>
  );
}

function DocIcon({sell}: {sell : boolean}): ReactElement {
  return (
    <svg width="11" height="11" viewBox="0 0 11 11">
      <path d="M1.500 1h4.500l2.500 2.500v6.500h-7z" fill="#fff" stroke="#666" />
      <path d="M6 1v2.500h2.500" fill="none" stroke="#666" strokeWidth=".8" />
      <circle cx="8" cy="8.300" r="2.500" fill={sell ? '#e4502a' : '#2a93dc'} />
    </svg>
  );
}

function ToolItem({tool}: {tool : ITool}): ReactElement {
  if (tool.kind === 'sep') return <StyledToolSep $w={tool.w} />;
  if (tool.kind === 'grip') return <StyledGrip $w={tool.w} />;
  if (tool.kind === 'period') return <StyledPeriod $w={tool.w} $pressed={tool.pressed}>{tool.text}</StyledPeriod>;
  return (
    <StyledTool $w={tool.w} $pressed={tool.pressed}>
      {tool.icon && <Icon name={tool.icon} />}
      {tool.text}
      {tool.caret && <Caret />}
    </StyledTool>
  );
}

function OrderRow({order, odd}: {order : string[], odd : boolean}): ReactElement {
  return (
    <StyledRow $odd={odd}>
      {order.map((value, i) => {
        if (i === 0) return <StyledOrderCell key={i}><DocIcon sell={order[2] === 'sell'} />{value}</StyledOrderCell>;
        if (i === 2 || i === 4 || i === 12) return <StyledWordCell key={i}>{value}</StyledWordCell>;
        return <StyledCell key={i} $tp={i === 7}>{value}</StyledCell>;
      })}
    </StyledRow>
  );
}

function App(): ReactElement {
  return (
    <>
      <GlobalStyle />
      <StyledDesktop>
        <StyledLeftEdge />
        <StyledWindow>
          <StyledMenuBar>
            <StyledMenuIcon viewBox="0 0 11 6"><path d="M1 0h6v3H1zM4 2h6v3H4z" fill="#dcebf8" stroke="#7fa3c7" /></StyledMenuIcon>
            {menu.map(([text, w]) => <StyledMenuItem key={text} $w={w}>{text}</StyledMenuItem>)}
            <StyledWinButtons viewBox="0 0 37 7">
              <path d="M.5-2h11v8H.5zM12.500-2h11v8h-11zM24.500-2h12v8h-12z" fill="#d8e4f2" stroke="#a2b4cb" />
              <path d="M4 3.500h4M16.500 3.500V1.500h3.500v2zM28.500 0l4 4M32.500 0l-4 4" stroke="#4c5b70" fill="none" />
            </StyledWinButtons>
          </StyledMenuBar>
          <StyledToolBar>
            {tools.map((tool, i) => <ToolItem key={i} tool={tool} />)}
            <StyledToolRight>
              <svg width="12" height="14" viewBox="0 0 12 14"><circle cx="7" cy="5.500" r="3" fill="#eef5ff" stroke="#3b6fd0" strokeWidth="1.300" /><path d="M5 8l-3 3.500" stroke="#3b6fd0" strokeWidth="1.800" /></svg>
              <svg width="18" height="16" viewBox="0 0 18 16"><path d="M1 10c0-3 8-3 8 0s-3 3.500-5 3.500l-2 1.500z" fill="#cfcfcf" /><circle cx="10" cy="7" r="5.600" fill="#e2381c" /><path d="M10 3.500v7M8.500 5.200L10 3.800" stroke="#fff" strokeWidth="1.500" fill="none" /></svg>
            </StyledToolRight>
          </StyledToolBar>
          <Chart />
          <StyledChartTabs>
            {chartTabs.map(([text, w]) => <StyledChartTab key={text} $w={w} $active={text === 'AUDUSD,H1'}>{text}</StyledChartTab>)}
            <StyledTabArrows viewBox="0 0 20 13">
              <path d="M4 4v4L2 6z" fill="#999" />
              <path d="M13 3.500v5l3-2.500z" fill="#111" />
            </StyledTabArrows>
          </StyledChartTabs>
          <StyledTerminal>
            <StyledSide>
              <StyledSideClose>×</StyledSideClose>
              <StyledSideLabel>Терминал</StyledSideLabel>
            </StyledSide>
            <StyledPanel>
              <StyledTableArea>
                <StyledTable>
                  <StyledHeaderRow>
                    {headers.map((text, i) => (
                      <StyledHeaderCell key={i} $left={i === 0} $pad={i === 1 ? 5 : 2}>
                        {text}{i === 1 && <i>/</i>}
                      </StyledHeaderCell>
                    ))}
                  </StyledHeaderRow>
                  {orders.map((order, i) => <OrderRow key={order[0]} order={order} odd={i % 2 === 1} />)}
                  <StyledTotalRow>
                    <StyledTotalDot />
                    <StyledTotalText>Прибыль: 136.17  Кредит: 0.00  Депозит: 0.00  Снятие: 0.00</StyledTotalText>
                    <StyledTotalSum>136.17</StyledTotalSum>
                  </StyledTotalRow>
                </StyledTable>
                <StyledScroll>
                  <StyledScrollArrow viewBox="0 0 9 9"><path d="M2.500 6h4l-2-3z" fill="#444" /></StyledScrollArrow>
                  <StyledThumb><i /><i /><i /></StyledThumb>
                  <StyledScrollArrow viewBox="0 0 9 9"><path d="M2.500 4h4l-2 3z" fill="#444" /></StyledScrollArrow>
                </StyledScroll>
              </StyledTableArea>
              <StyledBottomTabs>
                {bottomTabs.map(([text, w, count]) => (
                  <StyledBottomTab key={text} $w={w} $active={text === 'История Счета'}>
                    {text}{count && <b>{count}</b>}
                  </StyledBottomTab>
                ))}
              </StyledBottomTabs>
            </StyledPanel>
          </StyledTerminal>
        </StyledWindow>
        <StyledRightEdge>
          <StyledHandle />
        </StyledRightEdge>
      </StyledDesktop>
    </>
  );
}

export default App;
